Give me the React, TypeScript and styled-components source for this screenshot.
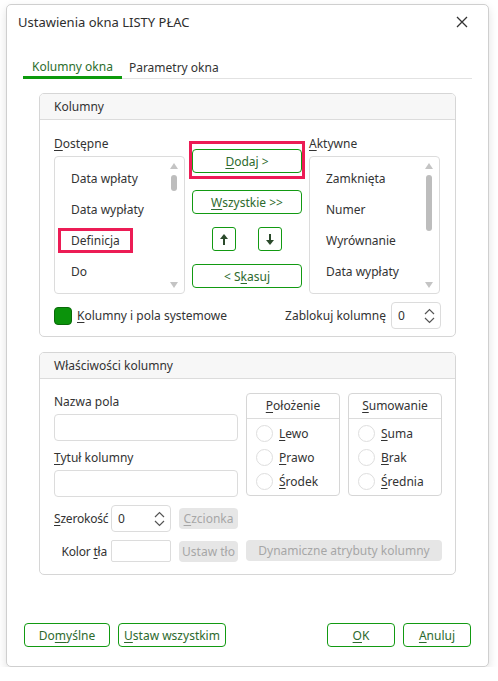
import React from 'react';
import styled, { createGlobalStyle } from 'styled-components';

const GlobalStyle = createGlobalStyle`
    body {
        margin: 0;
        background: #ffffff;
        font-family: "Noto Sans", "Liberation Sans", sans-serif;
        font-size: 12px;
        color: #333333;
    }
    u {
        text-underline-offset: 2px;
    }
`;

const available = ['Data wpłaty', 'Data wypłaty', 'Definicja', 'Do'];
const active = ['Zamknięta', 'Numer', 'Wyrównanie', 'Data wypłaty'];

function UpArrow() {
    return (
        <svg width="10" height="13" viewBox="0 0 10 13">
            <path d="M5 1 L9 6 L1 6 Z" fill="#2b4a2b" />
            <rect x="4" y="5" width="2" height="7" fill="#2b4a2b" />
        </svg>
    );
}

function DownArrow() {
    return (
        <svg width="10" height="13" viewBox="0 0 10 13">
            <path d="M5 12 L9 7 L1 7 Z" fill="#2b4a2b" />
            <rect x="4" y="1" width="2" height="7" fill="#2b4a2b" />
        </svg>
    );
}

function Chevrons() {
    return (
        <ChevronBox>
            <svg width="11" height="7" viewBox="0 0 11 7">
                <path d="M1 6 L5.5 1.5 L10 6" fill="none" stroke="#555" strokeWidth="1.2" />
            </svg>
            <svg width="11" height="7" viewBox="0 0 11 7">
                <path d="M1 1 L5.5 5.5 L10 1" fill="none" stroke="#555" strokeWidth="1.2" />
            </svg>
        </ChevronBox>
    );
}

function CloseIcon() {
    return (
        <svg width="12" height="12" viewBox="0 0 12 12">
            <path d="M1 1 L11 11 M11 1 L1 11" stroke="#333" strokeWidth="1.3" />
        </svg>
    );
}

function ListBox({ items, thumb, mark }: { items: string[]; thumb: number; mark?: string }) {
    return (
        <List>
            {items.map((it) => (
                <ListItem key={it}>
                    <ItemText $marked={it === mark}>{it}</ItemText>
                </ListItem>
            ))}
            <ScrollTrack>
                <TriUp />
                <Thumb style={{ height: thumb }} />
                <Spacer />
                <TriDown />
            </ScrollTrack>
        </List>
    );
}

function RadioGroup({ title, options }: { title: React.ReactNode; options: React.ReactNode[] }) {
    return (
        <RadioBox>
            <RadioHead>{title}</RadioHead>
            {options.map((o, i) => (
                <RadioRow key={i}>
                    <Circle />
                    <span>{o}</span>
                </RadioRow>
            ))}
        </RadioBox>
    );
}

export default function App() {
    return (
        <>
            <GlobalStyle />
            <Dialog>
                <TitleBar>
                    <span>Ustawienia okna LISTY PŁAC</span>
                    <CloseIcon />
                </TitleBar>
                <Tabs>
                    <Tab $active>Kolumny okna</Tab>
                    <Tab>Parametry okna</Tab>
                    <TabRest />
                </Tabs>
                <Content>
                    <Group>
                        <GroupHead>Kolumny</GroupHead>
                        <ColumnsBody>
                            <Label><u>D</u>ostępne</Label>
                            <Middle>
                                <Highlight>
                                    <GreenButton $w={110}><u>D</u>odaj &gt;</GreenButton>
                                </Highlight>
                                <GreenButton $w={110}><u>W</u>szystkie &gt;&gt;</GreenButton>
                                <ArrowRow>
                                    <ArrowButton><UpArrow /></ArrowButton>
                                    <ArrowButton><DownArrow /></ArrowButton>
                                </ArrowRow>
                                <GreenButton $w={110}>&lt; S<u>k</u>asuj</GreenButton>
                            </Middle>
                            <Label><u>A</u>ktywne</Label>
                            <ListBox items={available} thumb={16} mark="Definicja" />
                            <ListBox items={active} thumb={56} />
                        </ColumnsBody>
                        <SystemRow>
                            <CheckLabel>
                                <CheckBox />
                                <span><u>K</u>olumny i pola systemowe</span>
                            </CheckLabel>
                            <LockLabel>
                                <span>Zablokuj kolumnę</span>
                                <Spin $w={50} $h={27}>
                                    <span>0</span>
                                    <Chevrons />
                                </Spin>
                            </LockLabel>
                        </SystemRow>
                    </Group>

                    <Group>
                        <GroupHead>Właściwości kolumny</GroupHead>
                        <PropsBody>
                            <Fields>
                                <FieldLabel>Nazwa pola</FieldLabel>
                                <TextInput />
                                <FieldLabel $top={10}><u>T</u>ytuł kolumny</FieldLabel>
                                <TextInput />
                                <InlineRow $top={8}>
                                    <RowLabel><u>S</u>zerokość</RowLabel>
                                    <Spin $w={60} $h={27}>
                                        <span>0</span>
                                        <Chevrons />
                                    </Spin>
                                    <GrayButton $w={59}><u>C</u>zcionka</GrayButton>
                                </InlineRow>
                            </Fields>
                            <RadioGroup
                                title={<><u>P</u>ołożenie</>}
                                options={[<><u>L</u>ewo</>, <><u>P</u>rawo</>, <><u>Ś</u>rodek</>]}
                            />
                            <RadioGroup
                                title={<><u>S</u>umowanie</>}
                                options={[<><u>S</u>uma</>, <><u>B</u>rak</>, <><u>Ś</u>rednia</>]}
                            />
                            <InlineRow>
                                <RowLabel $right>Kolor <u>t</u>ła</RowLabel>
                                <ColorInput />
                                <GrayButton $w={59}>Ustaw tło</GrayButton>
                            </InlineRow>
                            <GrayButton $span>Dynamiczne atrybuty kolumny</GrayButton>
                        </PropsBody>
                    </Group>
                </Content>
                <Footer>
                    <FooterSide>
                        <GreenButton $w={86}>Do<u>m</u>yślne</GreenButton>
                        <GreenButton $w={108}><u>U</u>staw wszystkim</GreenButton>
                    </FooterSide>
                    <FooterSide>
                        <GreenButton $w={68}><u>O</u>K</GreenButton>
                        <GreenButton $w={68}><u>A</u>nuluj</GreenButton>
                    </FooterSide>
                </Footer>
            </Dialog>
        </>
    );
}

const Dialog = styled.div`
    box-sizing: border-box;
    margin: 4px 0 0 6px;
    width: 483px;
    height: 663px;
    border: 1px solid #cfcfcf;
    border-radius: 5px;
    box-shadow: 0 4px 10px rgba(0, 0, 0, 0.12);
    background: #fff;
    display: flex;
    flex-direction: column;
`;

const TitleBar = styled.div`
    height: 33px;
    padding: 0 20px 0 11px;
    display: flex;
    align-items: center;
    justify-content: space-between;
    font-size: 13px;
    color: #2e2e2e;
`;

const Tabs = styled.div`
    display: flex;
    margin: 19px 16px 0;
    height: 22px;
`;

const Tab = styled.div<{ $active?: boolean }>`
    padding: 0 ${(p) => (p.$active ? 9 : 7)}px;
    border-bottom: ${(p) => (p.$active ? '3px solid #0c9a0c' : '1px solid #e2e2e2')};
    color: ${(p) => (p.$active ? '#2d6e2d' : '#333')};
    line-height: ${(p) => (p.$active ? '19px' : '21px')};
`;

const TabRest = styled.div`
    flex: 1;
    border-bottom: 1px solid #e2e2e2;
`;

const Content = styled.div`
    flex: 1;
    padding: 14px 32px 0;
    display: flex;
    flex-direction: column;
    gap: 15px;
`;

const Group = styled.div`
    border: 1px solid #d6d6d6;
    border-radius: 5px;
    overflow: hidden;
`;

const GroupHead = styled.div`
    height: 25px;
    line-height: 25px;
    padding: 0 14px;
    background: #f7f7f7;
    border-bottom: 1px solid #dcdcdc;
`;

const ColumnsBody = styled.div`
    display: grid;
    grid-template-columns: 131px 116px 131px;
    grid-template-rows: 14px 138px;
    column-gap: 4px;
    row-gap: 5px;
    padding: 17px 14px 0;
`;

const Label = styled.div`
    line-height: 14px;
`;

const Middle = styled.div`
    grid-column: 2;
    grid-row: 1 / span 2;
    display: flex;
    flex-direction: column;
    align-items: center;
    padding-top: 4px;
`;

const Highlight = styled.div`
    box-sizing: border-box;
    width: 116px;
    padding: 5px 0 3px;
    border: 3px solid #ec1c55;
    display: flex;
    justify-content: center;
    margin-bottom: 11px;
`;

const GreenButton = styled.div<{ $w: number }>`
    box-sizing: border-box;
    width: ${(p) => p.$w}px;
    height: 24px;
    border: 1px solid #129a12;
    border-radius: 4px;
    display: flex;
    align-items: center;
    justify-content: center;
    color: #2d6a2d;
    background: #fff;
`;

const ArrowRow = styled.div`
    display: flex;
    gap: 22px;
    margin: 13px 0;
`;

const ArrowButton = styled.div`
    box-sizing: border-box;
    width: 24px;
    height: 24px;
    border: 1px solid #129a12;
    border-radius: 3px;
    display: flex;
    align-items: center;
    justify-content: center;
`;

const List = styled.div`
    position: relative;
    box-sizing: border-box;
    border: 1px solid #dcdcdc;
    border-radius: 4px;
    padding-top: 6px;
`;

const ListItem = styled.div`
    height: 31px;
    display: flex;
    align-items: center;
    padding-left: 3px;
`;

const ItemText = styled.span<{ $marked?: boolean }>`
    box-sizing: border-box;
    height: 25px;
    display: flex;
    align-items: center;
    padding: 0 ${(p) => (p.$marked ? '10px' : '13px')};
    border: ${(p) => (p.$marked ? '3px solid #ec1c55' : 'none')};
`;

const ScrollTrack = styled.div`
    position: absolute;
    top: 6px;
    bottom: 5px;
    right: 6px;
    width: 8px;
    display: flex;
    flex-direction: column;
    align-items: center;
`;

const TriUp = styled.div`
    width: 0;
    height: 0;
    border-left: 4px solid transparent;
    border-right: 4px solid transparent;
    border-bottom: 6px solid #c4c4c4;
    margin-bottom: 6px;
`;

const TriDown = styled.div`
    width: 0;
    height: 0;
    border-left: 4px solid transparent;
    border-right: 4px solid transparent;
    border-top: 6px solid #c4c4c4;
`;

const Thumb = styled.div`
    width: 6px;
    border-radius: 3px;
    background: #bdbdbd;
`;

const Spacer = styled.div`
    flex: 1;
`;

const SystemRow = styled.div`
    display: flex;
    justify-content: space-between;
    align-items: center;
    padding: 8px 14px 7px;
`;

const CheckLabel = styled.div`
    display: flex;
    align-items: center;
    gap: 5px;
`;

const CheckBox = styled.div`
    box-sizing: border-box;
    width: 18px;
    height: 18px;
    border-radius: 4px;
    background: #0b930b;
    border: 1px solid #0a6a0a;
`;

const LockLabel = styled.div`
    display: flex;
    align-items: center;
    gap: 5px;
`;

const Spin = styled.div<{ $w: number; $h: number }>`
    box-sizing: border-box;
    flex-shrink: 0;
    width: ${(p) => p.$w}px;
    height: ${(p) => p.$h}px;
    border: 1px solid #dcdcdc;
    border-radius: 4px;
    display: flex;
    align-items: center;
    justify-content: space-between;
    padding: 0 5px 0 6px;
`;

const ChevronBox = styled.div`
    display: flex;
    flex-direction: column;
    gap: 2px;
`;

const PropsBody = styled.div`
    display: grid;
    grid-template-columns: 184px 94px 94px;
    column-gap: 8px;
    row-gap: 8px;
    padding: 14px 14px 12px;
`;

const Fields = styled.div`
    display: flex;
    flex-direction: column;
    padding-top: 2px;
`;

const FieldLabel = styled.div<{ $top?: number }>`
    line-height: 14px;
    margin: ${(p) => p.$top || 0}px 0 5px;
`;

const TextInput = styled.div`
    box-sizing: border-box;
    height: 27px;
    border: 1px solid #dcdcdc;
    border-radius: 4px;
`;

const InlineRow = styled.div<{ $top?: number }>`
    display: flex;
    align-items: center;
    gap: 8px;
    margin-top: ${(p) => p.$top || 0}px;
`;

const RowLabel = styled.div<{ $right?: boolean }>`
    flex-shrink: 0;
    width: 53px;
    margin-right: -4px;
    white-space: nowrap;
    letter-spacing: -0.2px;
    text-align: ${(p) => (p.$right ? 'right' : 'left')};
`;

const ColorInput = styled.div`
    box-sizing: border-box;
    flex-shrink: 0;
    width: 60px;
    height: 22px;
    border: 1px solid #dcdcdc;
    border-radius: 2px;
`;

const GrayButton = styled.div<{ $w?: number; $span?: boolean }>`
    box-sizing: border-box;
    flex-shrink: 0;
    width: ${(p) => (p.$w ? `${p.$w}px` : 'auto')};
    grid-column: ${(p) => (p.$span ? '2 / span 2' : 'auto')};
    height: 21px;
    border-radius: 4px;
    background: #e6e6e6;
    color: #a6a6a6;
    display: flex;
    align-items: center;
    justify-content: center;
`;

const RadioBox = styled.div`
    align-self: start;
    border: 1px solid #d6d6d6;
    border-radius: 4px;
    padding-bottom: 2px;
`;

const RadioHead = styled.div`
    height: 24px;
    line-height: 24px;
    text-align: center;
    border-bottom: 1px solid #dcdcdc;
    margin-bottom: 2px;
`;

const RadioRow = styled.div`
    height: 24px;
    display: flex;
    align-items: center;
    gap: 6px;
    padding-left: 9px;
`;

const Circle = styled.div`
    box-sizing: border-box;
    width: 17px;
    height: 17px;
    border-radius: 50%;
    border: 1px solid #dedede;
`;

const Footer = styled.div`
    display: flex;
    justify-content: space-between;
    padding: 0 17px 19px;
`;

const FooterSide = styled.div`
    display: flex;
    gap: 8px;
`;
